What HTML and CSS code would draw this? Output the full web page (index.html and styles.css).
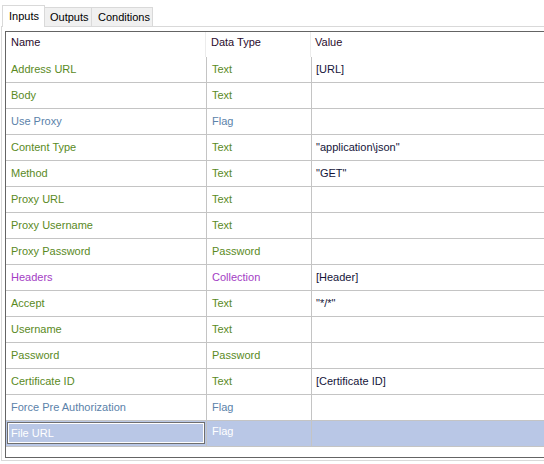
FILE: index.html
```html
<!DOCTYPE html>
<html>
<head>
<meta charset="utf-8">
<link rel="stylesheet" href="styles.css">
</head>
<body>
<div class="tabs">
  <div class="tab active t-inputs">Inputs</div>
  <div class="tab t-outputs">Outputs</div>
  <div class="tab t-conditions">Conditions</div>
</div>
<div class="panel">
  <div class="grid">
    <div class="row head">
      <div class="c n">Name</div><div class="c t">Data Type</div><div class="c v">Value</div>
    </div>
    <div class="row olive"><div class="c n">Address URL</div><div class="c t">Text</div><div class="c v">[URL]</div></div>
    <div class="row olive"><div class="c n">Body</div><div class="c t">Text</div><div class="c v"></div></div>
    <div class="row blue"><div class="c n">Use Proxy</div><div class="c t">Flag</div><div class="c v"></div></div>
    <div class="row olive"><div class="c n">Content Type</div><div class="c t">Text</div><div class="c v">"application\json"</div></div>
    <div class="row olive"><div class="c n">Method</div><div class="c t">Text</div><div class="c v">"GET"</div></div>
    <div class="row olive"><div class="c n">Proxy URL</div><div class="c t">Text</div><div class="c v"></div></div>
    <div class="row olive"><div class="c n">Proxy Username</div><div class="c t">Text</div><div class="c v"></div></div>
    <div class="row olive"><div class="c n">Proxy Password</div><div class="c t">Password</div><div class="c v"></div></div>
    <div class="row purple"><div class="c n">Headers</div><div class="c t">Collection</div><div class="c v">[Header]</div></div>
    <div class="row olive"><div class="c n">Accept</div><div class="c t">Text</div><div class="c v">"*/*"</div></div>
    <div class="row olive"><div class="c n">Username</div><div class="c t">Text</div><div class="c v"></div></div>
    <div class="row olive"><div class="c n">Password</div><div class="c t">Password</div><div class="c v"></div></div>
    <div class="row olive"><div class="c n">Certificate ID</div><div class="c t">Text</div><div class="c v">[Certificate ID]</div></div>
    <div class="row blue"><div class="c n">Force Pre Authorization</div><div class="c t">Flag</div><div class="c v"></div></div>
    <div class="row sel"><div class="c n"><div class="editor">File URL</div></div><div class="c t">Flag</div><div class="c v"></div></div>
  </div>
</div>
</body>
</html>
```
FILE: styles.css
```css
html, body {
  margin: 0;
  padding: 0;
  background: #ffffff;
  overflow: hidden;
}
body {
  font-family: "Liberation Sans", Arial, sans-serif;
  font-size: 11px;
  color: #000;
  width: 544px;
  height: 464px;
}
.tabs {
  display: flex;
  align-items: flex-end;
  height: 26px;
  padding-left: 2px;
  position: relative;
  z-index: 1;
}
.tab {
  box-sizing: border-box;
  height: 19px;
  line-height: 18px;
  padding-left: 5px;
  background: #f0f0f0;
  border: 1px solid #d9d9d9;
  border-bottom: none;
  color: #000;
  white-space: nowrap;
}
.tab.active {
  height: 22px;
  line-height: 20px;
  background: #ffffff;
  margin-bottom: -1px;
  padding-left: 6px;
}
.t-inputs { width: 43px; }
.t-outputs { width: 47px; border-left: none; }
.t-conditions { width: 61px; border-left: none; padding-left: 6px; }
.panel {
  margin-left: 1px;
  border-left: 1px solid #d9d9d9;
  border-top: 1px solid #d9d9d9;
  border-bottom: 1px solid #d9d9d9;
  padding: 4px 0 2px 3px;
  background: #ffffff;
}
.grid {
  box-sizing: border-box;
  height: 427px;
  border-left: 1px solid #646464;
  border-top: 1px solid #646464;
  border-bottom: 1px solid #646464;
  background: #ffffff;
}
.row {
  display: grid;
  grid-template-columns: 201px 105px 1fr;
  box-sizing: border-box;
  height: 26px;
  border-bottom: 1px solid #c4c4c4;
}
.c {
  box-sizing: border-box;
  line-height: 25px;
  white-space: nowrap;
  overflow: hidden;
}
.c.n { padding-left: 5px; border-right: 1px solid #c4c4c4; }
.c.t { padding-left: 5px; border-right: 1px solid #c4c4c4; }
.c.v { padding-left: 4px; color: #15153a; }
.row.head {
  height: 25px;
  border-bottom: none;
  grid-template-columns: 200px 105px 1fr;
}
.row.head .c {
  line-height: 20px;
  color: #2a0c2c;
  border-right-color: #ececec;
}
.olive .c.n, .olive .c.t { color: #5a8a1e; }
.blue .c.n, .blue .c.t { color: #5b82aa; }
.purple .c.n, .purple .c.t { color: #a33dc4; }
.row.sel {
  background: #b9c7e6;
}
.row.sel .c.n {
  padding: 1px;
}
.editor {
  box-sizing: border-box;
  height: 22px;
  width: 198px;
  border: 1px solid #6e6e6e;
  box-shadow: inset 0 0 0 1px #ffffff;
  padding-left: 3px;
  line-height: 20px;
  color: #ffffff;
}
.row.sel .c.t {
  color: #ffffff;
  line-height: 20px;
}
```
